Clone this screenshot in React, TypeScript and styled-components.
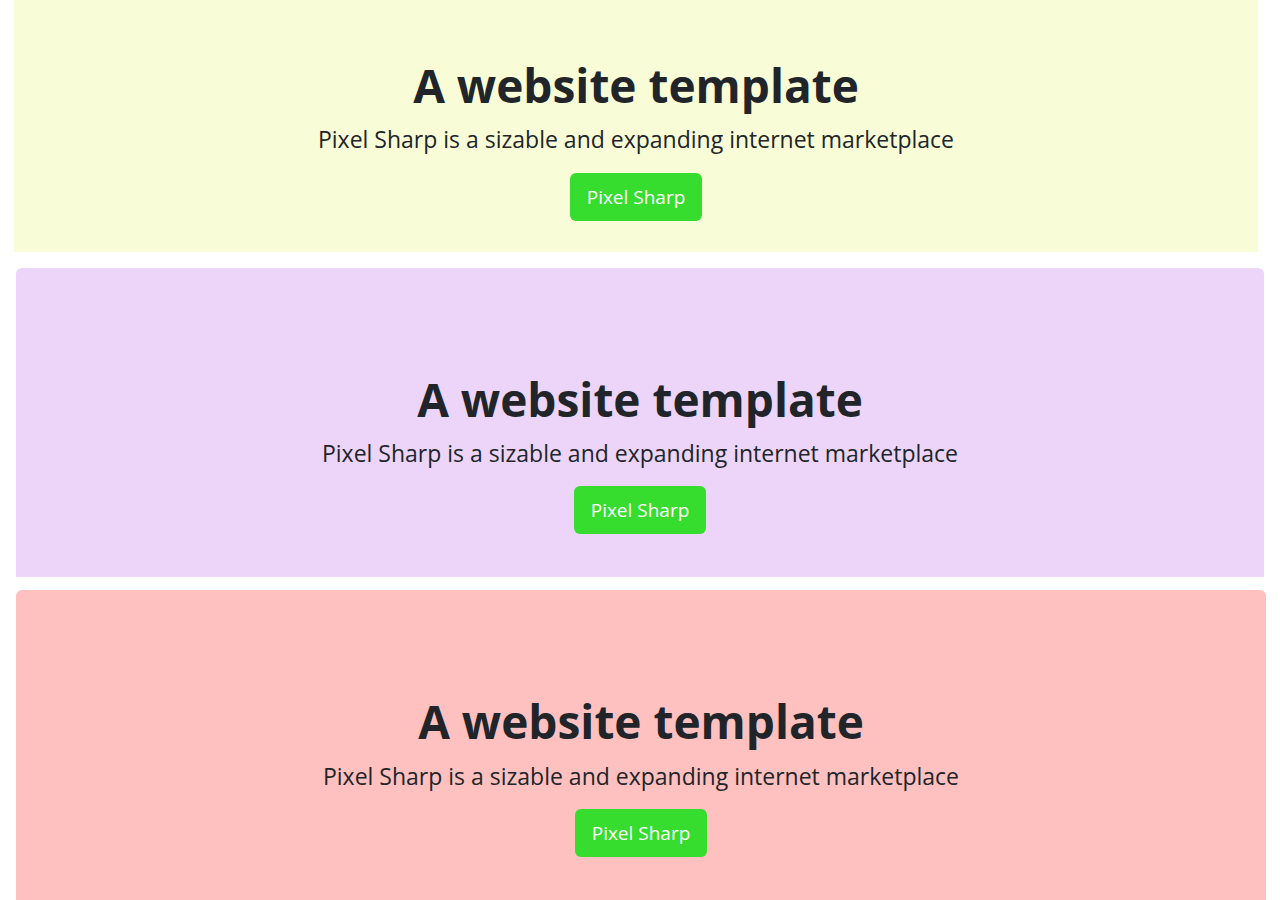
import React from "react";
import styled, { createGlobalStyle } from "styled-components";

const GlobalStyle = createGlobalStyle`
  * { box-sizing: border-box; }
  body {
    margin: 0;
    background: #ffffff;
    font-family: "Open Sans", "Noto Sans", "Liberation Sans", sans-serif;
    color: #212529;
  }
`;

type Banner = {
  bg: string;
  left: number;
  width: number;
  top: number;
  padTop: number;
  padBottom: number;
  rounded: boolean;
};

const banners: Banner[] = [
  { bg: "#f9fdd7", left: 14, width: 1244, top: 0, padTop: 58, padBottom: 31, rounded: false },
  { bg: "#ecd5f9", left: 16, width: 1248, top: 16, padTop: 104, padBottom: 43, rounded: true },
  { bg: "#fec1c0", left: 16, width: 1250, top: 13, padTop: 104, padBottom: 80, rounded: true },
];

export default function App() {
  return (
    <>
      <GlobalStyle />
      <Page>
        {banners.map((b, i) => (
          <Jumbotron
            key={i}
            $bg={b.bg}
            $left={b.left}
            $width={b.width}
            $top={b.top}
            $padTop={b.padTop}
            $padBottom={b.padBottom}
            $rounded={b.rounded}
          >
            <Title>A website template</Title>
            <Lead>Pixel Sharp is a sizable and expanding internet marketplace</Lead>
            <Button>Pixel Sharp</Button>
          </Jumbotron>
        ))}
      </Page>
    </>
  );
}

const Page = styled.div`
  display: flex;
  flex-direction: column;
  width: 1280px;
`;

const Jumbotron = styled.section<{
  $bg: string;
  $left: number;
  $width: number;
  $top: number;
  $padTop: number;
  $padBottom: number;
  $rounded: boolean;
}>`
  display: flex;
  flex-direction: column;
  align-items: center;
  margin-left: ${(p) => p.$left}px;
  margin-top: ${(p) => p.$top}px;
  width: ${(p) => p.$width}px;
  padding: ${(p) => p.$padTop}px 0 ${(p) => p.$padBottom}px;
  background: ${(p) => p.$bg};
  border-radius: ${(p) => (p.$rounded ? "6px 6px 0 0" : "0")};
`;

const Title = styled.h1`
  margin: 0;
  font-size: 46px;
  font-weight: 700;
  line-height: 1.2;
  color: #212529;
`;

const Lead = styled.p`
  margin: 9px 0 16px;
  font-size: 23px;
  font-weight: 400;
  line-height: 1.5;
  color: #212529;
`;

const Button = styled.button`
  height: 48px;
  padding: 0 17px;
  border: none;
  border-radius: 6px;
  background: #36dc2e;
  color: #ffffff;
  font-family: inherit;
  font-size: 19px;
  cursor: pointer;
`;
